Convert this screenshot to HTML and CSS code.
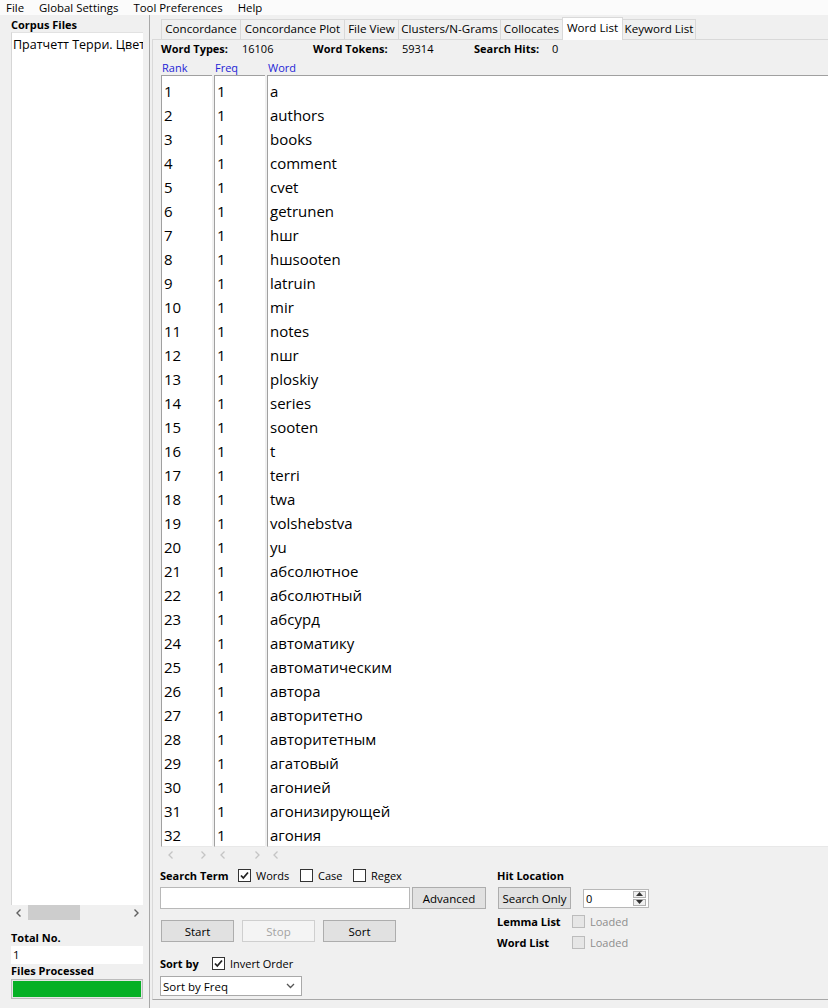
FILE: index.html
```html
<!DOCTYPE html>
<html>
<head>
<meta charset="utf-8">
<link rel="stylesheet" href="styles.css">
</head>
<body>
<div class="menubar">
  <span class="menu">File</span>
  <span class="menu">Global Settings</span>
  <span class="menu">Tool Preferences</span>
  <span class="menu">Help</span>
</div>
<div class="main">
  <div class="left">
    <div class="lbl">Corpus Files</div>
    <div class="listbox"><div class="file">Пратчетт Терри. Цвет волшебства</div></div>
    <div class="hscroll">
      <svg class="arr" width="8" height="10" viewBox="0 0 8 10"><path d="M5.5 1.5 L2 5 L5.5 8.5" fill="none" stroke="#606060" stroke-width="1.4"/></svg>
      <div class="thumb"></div>
      <div class="spacer"></div>
      <svg class="arr" width="8" height="10" viewBox="0 0 8 10"><path d="M2.5 1.5 L6 5 L2.5 8.5" fill="none" stroke="#606060" stroke-width="1.4"/></svg>
    </div>
    <div class="lbl total">Total No.</div>
    <div class="numbox">1</div>
    <div class="lbl">Files Processed</div>
    <div class="progress"><div class="bar"></div></div>
  </div>
  <div class="right">
    <div class="tabs">
      <div class="tab t1">Concordance</div>
      <div class="tab t2">Concordance Plot</div>
      <div class="tab t3">File View</div>
      <div class="tab t4">Clusters/N-Grams</div>
      <div class="tab t5">Collocates</div>
      <div class="tab t6 active">Word List</div>
      <div class="tab t7">Keyword List</div>
    </div>
    <div class="pane">
      <div class="stats">
        <span class="b s1">Word Types:</span><span class="s2">16106</span>
        <span class="b s3">Word Tokens:</span><span class="s4">59314</span>
        <span class="b s5">Search Hits:</span><span>0</span>
      </div>
      <div class="heads">
        <span class="h h1">Rank</span><span class="h h2">Freq</span><span class="h">Word</span>
      </div>
      <div class="table">
        <div class="col c-rank">
          <div>1</div><div>2</div><div>3</div><div>4</div><div>5</div><div>6</div><div>7</div><div>8</div>
          <div>9</div><div>10</div><div>11</div><div>12</div><div>13</div><div>14</div><div>15</div><div>16</div>
          <div>17</div><div>18</div><div>19</div><div>20</div><div>21</div><div>22</div><div>23</div><div>24</div>
          <div>25</div><div>26</div><div>27</div><div>28</div><div>29</div><div>30</div><div>31</div><div>32</div>
        </div>
        <div class="col c-freq">
          <div>1</div><div>1</div><div>1</div><div>1</div><div>1</div><div>1</div><div>1</div><div>1</div>
          <div>1</div><div>1</div><div>1</div><div>1</div><div>1</div><div>1</div><div>1</div><div>1</div>
          <div>1</div><div>1</div><div>1</div><div>1</div><div>1</div><div>1</div><div>1</div><div>1</div>
          <div>1</div><div>1</div><div>1</div><div>1</div><div>1</div><div>1</div><div>1</div><div>1</div>
        </div>
        <div class="col c-word">
          <div>a</div><div>authors</div><div>books</div><div>comment</div><div>cvet</div><div>getrunen</div><div>hшr</div><div>hшsooten</div>
          <div>latruin</div><div>mir</div><div>notes</div><div>nшr</div><div>ploskiy</div><div>series</div><div>sooten</div><div>t</div>
          <div>terri</div><div>twa</div><div>volshebstva</div><div>yu</div><div>абсолютное</div><div>абсолютный</div><div>абсурд</div><div>автоматику</div>
          <div>автоматическим</div><div>автора</div><div>авторитетно</div><div>авторитетным</div><div>агатовый</div><div>агонией</div><div>агонизирующей</div><div>агония</div>
        </div>
      </div>
      <div class="tscroll">
        <svg class="ta a1" width="8" height="10" viewBox="0 0 8 10"><path d="M5.5 1.5 L2 5 L5.5 8.5" fill="none" stroke="#c4c4c4" stroke-width="1.3"/></svg>
        <svg class="ta a2" width="8" height="10" viewBox="0 0 8 10"><path d="M2.5 1.5 L6 5 L2.5 8.5" fill="none" stroke="#c4c4c4" stroke-width="1.3"/></svg>
        <svg class="ta a3" width="8" height="10" viewBox="0 0 8 10"><path d="M5.5 1.5 L2 5 L5.5 8.5" fill="none" stroke="#c4c4c4" stroke-width="1.3"/></svg>
        <svg class="ta a4" width="8" height="10" viewBox="0 0 8 10"><path d="M2.5 1.5 L6 5 L2.5 8.5" fill="none" stroke="#c4c4c4" stroke-width="1.3"/></svg>
        <svg class="ta a5" width="8" height="10" viewBox="0 0 8 10"><path d="M5.5 1.5 L2 5 L5.5 8.5" fill="none" stroke="#c4c4c4" stroke-width="1.3"/></svg>
      </div>
      <div class="controls">
        <div class="cleft">
          <div class="row r-term">
            <span class="b lt">Search Term</span>
            <span class="cb checked"><svg width="11" height="11" viewBox="0 0 11 11"><path d="M2 5.5 L4.3 8 L9 2.5" fill="none" stroke="#222" stroke-width="1.8"/></svg></span>
            <span class="cbl lw">Words</span>
            <span class="cb"></span>
            <span class="cbl lc">Case</span>
            <span class="cb"></span>
            <span class="cbl">Regex</span>
          </div>
          <div class="row r-input">
            <div class="input"></div>
            <div class="btn adv">Advanced</div>
          </div>
          <div class="row r-btns">
            <div class="btn act">Start</div>
            <div class="btn act disabled">Stop</div>
            <div class="btn act">Sort</div>
          </div>
          <div class="row r-sort">
            <span class="b ls">Sort by</span>
            <span class="cb checked"><svg width="11" height="11" viewBox="0 0 11 11"><path d="M2 5.5 L4.3 8 L9 2.5" fill="none" stroke="#222" stroke-width="1.8"/></svg></span>
            <span class="cbl">Invert Order</span>
          </div>
          <div class="select">
            <span>Sort by Freq</span>
            <svg width="9" height="6" viewBox="0 0 9 6"><path d="M1 1 L4.5 4.5 L8 1" fill="none" stroke="#555" stroke-width="1.3"/></svg>
          </div>
        </div>
        <div class="cright">
          <div class="row r-hit"><span class="b">Hit Location</span></div>
          <div class="row r-search">
            <div class="btn sonly">Search Only</div>
            <div class="spin">
              <span class="spinval">0</span>
              <div class="spinbtns">
                <div class="sb"><svg width="7" height="4" viewBox="0 0 7 4"><path d="M0 4 L3.5 0 L7 4 Z" fill="#333"/></svg></div>
                <div class="sb"><svg width="7" height="4" viewBox="0 0 7 4"><path d="M0 0 L3.5 4 L7 0 Z" fill="#333"/></svg></div>
              </div>
            </div>
          </div>
          <div class="row r-lem">
            <span class="b rl">Lemma List</span>
            <span class="cb dis"></span>
            <span class="cbl grey">Loaded</span>
          </div>
          <div class="row r-wl">
            <span class="b rl">Word List</span>
            <span class="cb dis"></span>
            <span class="cbl grey">Loaded</span>
          </div>
        </div>
      </div>
    </div>
  </div>
</div>
</body>
</html>
```

FILE: styles.css
```css
* { box-sizing: border-box; }
html, body {
  margin: 0;
  padding: 0;
}
body {
  width: 828px;
  height: 1008px;
  overflow: hidden;
  background: #f0f0f0;
  font-family: "Open Sans", "Noto Sans", sans-serif;
  font-size: 11px;
  color: #000;
}
.b { font-weight: 700; }

.menubar {
  height: 15px;
  background: #fbfbfb;
  display: flex;
  align-items: center;
  padding-left: 6px;
  gap: 15px;
  line-height: 12px;
  font-size: 11.4px;
}

.main {
  display: flex;
  height: 993px;
}

.left {
  width: 150px;
  flex: none;
  border-right: 1px solid #a8a8a8;
  padding-left: 11px;
  padding-right: 6px;
  display: flex;
  flex-direction: column;
}
.lbl {
  font-weight: 700;
  line-height: 14px;
  height: 14px;
}
.left > .lbl:first-child { margin-top: 3px; }
.listbox {
  height: 873px;
  background: #fff;
  border-left: 1px solid #d6d6d6;
  border-top: 1px solid #e2e2e2;
  overflow: hidden;
}
.file {
  font-size: 12.5px;
  white-space: nowrap;
  padding-left: 1px;
  padding-top: 3px;
  line-height: 17px;
}
.hscroll {
  height: 15px;
  display: flex;
  align-items: center;
  padding-left: 4px;
  padding-right: 3px;
}
.hscroll .thumb {
  width: 52px;
  height: 15px;
  background: #cdcdcd;
  margin-left: 5px;
}
.hscroll .spacer { flex: 1; }
.total { margin-top: 11px; }
.numbox {
  height: 18px;
  background: #fff;
  margin-top: 1px;
  padding-left: 2px;
  line-height: 18px;
  font-size: 11.5px;
}
.progress {
  height: 20px;
  margin-top: 1px;
  border: 1px solid #bcbcbc;
  background: #e6e6e6;
  padding: 1px;
}
.progress .bar {
  height: 100%;
  background: #06b025;
}

.right {
  flex: 1;
  padding-left: 2px;
  display: flex;
  flex-direction: column;
  min-width: 0;
}
.tabs {
  display: flex;
  align-items: flex-end;
  height: 24px;
  padding-left: 9px;
}
.tab {
  height: 20px;
  line-height: 18px;
  border: 1px solid #d9d9d9;
  border-bottom: none;
  margin-right: -1px;
  background: #f0f0f0;
  white-space: nowrap;
  font-size: 11.6px;
  text-align: center;
  flex: none;
}
.t1 { width: 80px; }
.t2 { width: 105px; }
.t3 { width: 55px; }
.t4 { width: 103px; }
.t5 { width: 63px; }
.t6 { width: 61px; }
.t7 { width: 74px; }
.tab.active {
  height: 23px;
  line-height: 19px;
  background: #fff;
  border-color: #d9d9d9;
  margin-bottom: -1px;
  position: relative;
  z-index: 1;
}
.pane {
  flex: 1;
  border-top: 1px solid #d9d9d9;
  border-left: 1px solid #d9d9d9;
  border-bottom: 1px solid #a8a8a8;
  padding-left: 8px;
  padding-top: 2px;
  display: flex;
  flex-direction: column;
  margin-bottom: 8px;
  overflow: hidden;
}
.stats {
  height: 14px;
  line-height: 14px;
  display: flex;
  white-space: nowrap;
}
.stats span { flex: none; white-space: nowrap; }
.s1 { width: 81px; }
.s2 { width: 71px; }
.s3 { width: 89px; }
.s4 { width: 72px; }
.s5 { width: 78px; }
.heads {
  height: 14px;
  line-height: 14px;
  margin-top: 5px;
  display: flex;
  padding-left: 1px;
}
.h { color: #2424d6; flex: none; }
.h1 { width: 53px; }
.h2 { width: 53px; }

.table {
  display: flex;
  height: 772px;
  font-size: 15px;
}
.col {
  background: #fff;
  border-top: 1px solid #a0a0a0;
  border-left: 1px solid #a0a0a0;
  border-bottom: 1px solid #e8e8e8;
  padding-top: 3px;
  padding-left: 2px;
  overflow: hidden;
}
.col > div {
  height: 24px;
  line-height: 24px;
  white-space: nowrap;
}
.c-rank { width: 51px; margin-right: 2px; flex: none; }
.c-freq { width: 51px; margin-right: 2px; flex: none; }
.c-word { flex: 1; border-right: none; }

.tscroll {
  height: 15px;
  position: relative;
}
.ta { position: absolute; top: 3px; }
.a1 { left: 6px; }
.a2 { left: 38px; }
.a3 { left: 58px; }
.a4 { left: 92px; }
.a5 { left: 111px; }

.controls {
  display: flex;
  margin-left: -1px;
}
.cleft { width: 337px; flex: none; }
.row {
  display: flex;
  align-items: center;
}
.row > span { flex: none; }
.r-term {
  height: 14px;
  margin-top: 6px;
}
.lt { width: 78px; }
.lw { width: 44px; }
.lc { width: 35px; }
.ls { width: 52px; }
.cb {
  width: 13px;
  height: 13px;
  border: 1px solid #333;
  background: #fff;
  display: inline-flex;
  align-items: center;
  justify-content: center;
  margin-right: 5px;
  flex: none;
}
.cb.dis {
  border-color: #bcbcbc;
  background: #e6e6e6;
}
.grey { color: #8d8d8d; }
.r-input {
  margin-top: 5px;
  height: 22px;
}
.input {
  width: 250px;
  height: 22px;
  background: #fff;
  border: 1px solid #b8b8b8;
}
.btn {
  height: 22px;
  background: #e1e1e1;
  border: 1px solid #adadad;
  display: flex;
  align-items: center;
  justify-content: center;
  font-size: 11.5px;
}
.adv { width: 74px; margin-left: 2px; }
.r-btns {
  margin-top: 11px;
  padding-left: 1px;
  gap: 8px;
}
.act { width: 73px; }
.disabled {
  background: #f4f4f4;
  border-color: #cfcfcf;
  color: #a3a3a3;
}
.r-sort {
  margin-top: 14px;
  height: 14px;
}
.select {
  margin-top: 6px;
  width: 142px;
  height: 20px;
  background: #fff;
  border: 1px solid #a9a9a9;
  display: flex;
  align-items: center;
  justify-content: space-between;
  padding-left: 2px;
  padding-right: 6px;
  font-size: 11.5px;
}

.r-hit {
  height: 14px;
  margin-top: 6px;
}
.r-search {
  margin-top: 5px;
  height: 22px;
  padding-left: 1px;
}
.sonly { width: 73px; }
.spin {
  margin-left: 12px;
  width: 66px;
  height: 19px;
  background: #fff;
  border: 1px solid #b8b8b8;
  display: flex;
  align-items: center;
  justify-content: space-between;
  padding-left: 2px;
  padding-right: 2px;
}
.spinbtns {
  display: flex;
  flex-direction: column;
  gap: 1px;
}
.sb {
  width: 13px;
  height: 7px;
  background: #f0f0f0;
  border: 1px solid #b0b0b0;
  display: flex;
  align-items: center;
  justify-content: center;
}
.r-lem {
  margin-top: 5px;
  height: 14px;
}
.r-wl {
  margin-top: 7px;
  height: 14px;
}
.rl { width: 75px; }
```
